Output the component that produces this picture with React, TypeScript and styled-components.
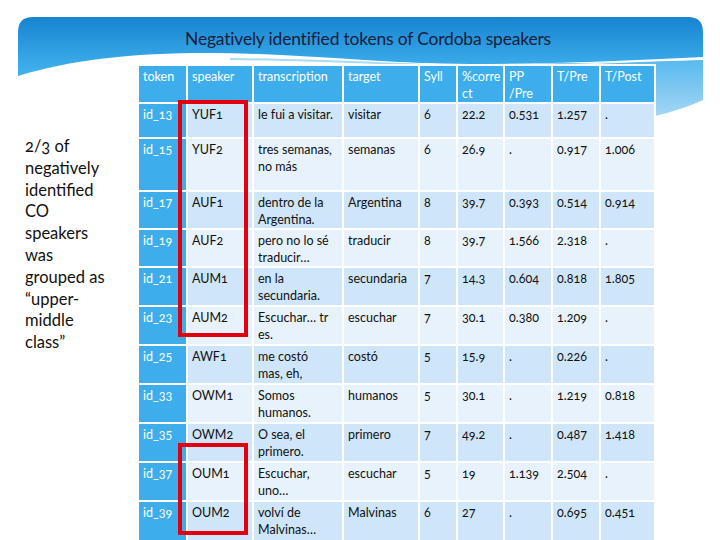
import React from 'react';
import styled, { createGlobalStyle } from 'styled-components';

const GlobalStyle = createGlobalStyle`
  html, body {
    margin: 0;
    padding: 0;
    background: #ffffff;
  }
  body {
    font-family: Lato, "Open Sans", sans-serif;
  }
`;

// Slide inteiro
const Slide = styled.div`
  position: relative;
  width: 720px;
  height: 540px;
  overflow: hidden;
  background: #ffffff;
`;

// Faixa azul do topo (desenho decorativo)
const BannerArt = styled.svg`
  position: absolute;
  top: 0;
  left: 0;
  z-index: 0;
`;

const Title = styled.h1`
  position: relative;
  z-index: 1;
  margin: 0;
  padding: 28px 0 0 16px;
  height: 22px;
  text-align: center;
  font-family: Lato, sans-serif;
  font-weight: 400;
  font-size: 17.5px;
  line-height: 22px;
  color: #1b1d3c;
  letter-spacing: -0.2px;
`;

const Body = styled.div`
  position: relative;
  z-index: 1;
  display: flex;
  margin-top: 14px;
`;

const Aside = styled.p`
  width: 137px;
  flex: none;
  margin: 0;
  padding: 72px 0 0 25px;
  box-sizing: border-box;
  font-family: Lato, sans-serif;
  font-size: 16.5px;
  line-height: 21.8px;
  color: #111111;
  font-variant-numeric: oldstyle-nums;
`;

const TableWrap = styled.div`
  position: relative;
`;

const DataTable = styled.table`
  border-collapse: collapse;
  table-layout: fixed;
  width: 517px;
  font-family: Lato, sans-serif;
  font-size: 12.5px;
  line-height: 17px;
  font-variant-numeric: oldstyle-nums;
`;

const Cell = styled.td<{ $head?: boolean; $dark?: boolean }>`
  border: 2px solid #ffffff;
  padding: 2px 4px 0;
  vertical-align: top;
  white-space: nowrap;
  overflow: visible;
  color: ${p => (p.$head ? '#ffffff' : '#111111')};
  background: ${p => (p.$head ? '#3daeeb' : p.$dark ? '#cfe5f9' : '#e7f2fc')};
`;

const HeadCell = styled(Cell).attrs({ as: 'th' })`
  text-align: left;
  font-weight: 400;
`;

const Row = styled.tr<{ $h: number }>`
  height: ${p => p.$h}px;
`;

// Retângulo vermelho por cima da coluna speaker
const Highlight = styled.div<{ $top: number; $height: number }>`
  position: absolute;
  left: 41px;
  top: ${p => p.$top}px;
  width: 70px;
  height: ${p => p.$height}px;
  border: 4px solid #e2000f;
  box-sizing: border-box;
  pointer-events: none;
`;

const widths = [49, 66, 90, 76, 38, 47, 48, 48, 55];

const headers: React.ReactNode[] = [
  'token',
  'speaker',
  'transcription',
  'target',
  'Syll',
  <>%corre<br />ct</>,
  <>PP<br />/Pre</>,
  'T/Pre',
  'T/Post',
];

const rows = [
  { id: 'id_13', sp: 'YUF1', tr: ['le fui a visitar.'], tg: 'visitar', sy: '6', pc: '22.2', pp: '0.531', pre: '1.257', post: '.', h: 35 },
  { id: 'id_15', sp: 'YUF2', tr: ['tres semanas,', 'no más'], tg: 'semanas', sy: '6', pc: '26.9', pp: '.', pre: '0.917', post: '1.006', h: 53 },
  { id: 'id_17', sp: 'AUF1', tr: ['dentro de la', 'Argentina.'], tg: 'Argentina', sy: '8', pc: '39.7', pp: '0.393', pre: '0.514', post: '0.914', h: 38 },
  { id: 'id_19', sp: 'AUF2', tr: ['pero no lo sé', 'traducir…'], tg: 'traducir', sy: '8', pc: '39.7', pp: '1.566', pre: '2.318', post: '.', h: 38 },
  { id: 'id_21', sp: 'AUM1', tr: ['en la', 'secundaria.'], tg: 'secundaria', sy: '7', pc: '14.3', pp: '0.604', pre: '0.818', post: '1.805', h: 39 },
  { id: 'id_23', sp: 'AUM2', tr: ['Escuchar… tr', 'es.'], tg: 'escuchar', sy: '7', pc: '30.1', pp: '0.380', pre: '1.209', post: '.', h: 39 },
  { id: 'id_25', sp: 'AWF1', tr: ['me costó', 'mas, eh,'], tg: 'costó', sy: '5', pc: '15.9', pp: '.', pre: '0.226', post: '.', h: 39 },
  { id: 'id_33', sp: 'OWM1', tr: ['Somos', 'humanos.'], tg: 'humanos', sy: '5', pc: '30.1', pp: '.', pre: '1.219', post: '0.818', h: 39 },
  { id: 'id_35', sp: 'OWM2', tr: ['O sea, el', 'primero.'], tg: 'primero', sy: '7', pc: '49.2', pp: '.', pre: '0.487', post: '1.418', h: 39 },
  { id: 'id_37', sp: 'OUM1', tr: ['Escuchar,', 'uno…'], tg: 'escuchar', sy: '5', pc: '19', pp: '1.139', pre: '2.504', post: '.', h: 39 },
  { id: 'id_39', sp: 'OUM2', tr: ['volví de', 'Malvinas…'], tg: 'Malvinas', sy: '6', pc: '27', pp: '.', pre: '0.695', post: '0.451', h: 40 },
];

const Banner: React.FC = () => (
  <BannerArt width="720" height="130" viewBox="0 0 720 130">
    <defs>
      <linearGradient id="bannerBlue" x1="0" y1="0" x2="0" y2="1">
        <stop offset="0%" stopColor="#1784d0" />
        <stop offset="100%" stopColor="#44b4ef" />
      </linearGradient>
      <linearGradient id="bannerLight" x1="0" y1="0" x2="0" y2="1">
        <stop offset="0%" stopColor="#58b9ee" />
        <stop offset="100%" stopColor="#a3d6f5" />
      </linearGradient>
    </defs>
    <path
      d="M470,64 C560,64 640,62 703,60 L703,100 C690,106 672,112 655,116 L470,116 Z"
      fill="url(#bannerLight)"
    />
    <path
      d="M18,32 Q18,17 33,17 L688,17 Q703,17 703,32 L703,57 C640,60 560,64 470,64 C380,64 300,53 210,53 C130,53 70,60 18,76 Z"
      fill="url(#bannerBlue)"
    />
    <path
      d="M200,57 C300,57 390,63 470,66 C560,66 640,62 703,58"
      fill="none"
      stroke="#ffffff"
      strokeWidth="1.2"
      opacity="0.9"
    />
    <path
      d="M230,59 C320,60 390,64 460,66"
      fill="none"
      stroke="#a9daf6"
      strokeWidth="2"
    />
  </BannerArt>
);

const App: React.FC = () => (
  <>
    <GlobalStyle />
    <Slide>
      <Banner />
      <Title>Negatively identified tokens of Cordoba speakers</Title>
      <Body>
        <Aside>
          2/3 of<br />
          negatively<br />
          identified<br />
          CO<br />
          speakers<br />
          was<br />
          grouped as<br />
          “upper-<br />
          middle<br />
          class”
        </Aside>
        <TableWrap>
          <DataTable>
            <colgroup>
              {widths.map((w, i) => (
                <col key={i} style={{ width: w }} />
              ))}
            </colgroup>
            <thead>
              <Row $h={38}>
                {headers.map((h, i) => (
                  <HeadCell key={i} $head>{h}</HeadCell>
                ))}
              </Row>
            </thead>
            <tbody>
              {rows.map((r, i) => {
                const dark = i % 2 === 0;
                return (
                  <Row key={r.id} $h={r.h}>
                    <Cell $head>{r.id}</Cell>
                    <Cell $dark={dark}>{r.sp}</Cell>
                    <Cell $dark={dark}>
                      {r.tr.map((line, j) => (
                        <React.Fragment key={j}>
                          {j > 0 && <br />}
                          {line}
                        </React.Fragment>
                      ))}
                    </Cell>
                    <Cell $dark={dark}>{r.tg}</Cell>
                    <Cell $dark={dark}>{r.sy}</Cell>
                    <Cell $dark={dark}>{r.pc}</Cell>
                    <Cell $dark={dark}>{r.pp}</Cell>
                    <Cell $dark={dark}>{r.pre}</Cell>
                    <Cell $dark={dark}>{r.post}</Cell>
                  </Row>
                );
              })}
            </tbody>
          </DataTable>
          <Highlight $top={36} $height={237} />
          <Highlight $top={379} $height={92} />
        </TableWrap>
      </Body>
    </Slide>
  </>
);

export default App;
